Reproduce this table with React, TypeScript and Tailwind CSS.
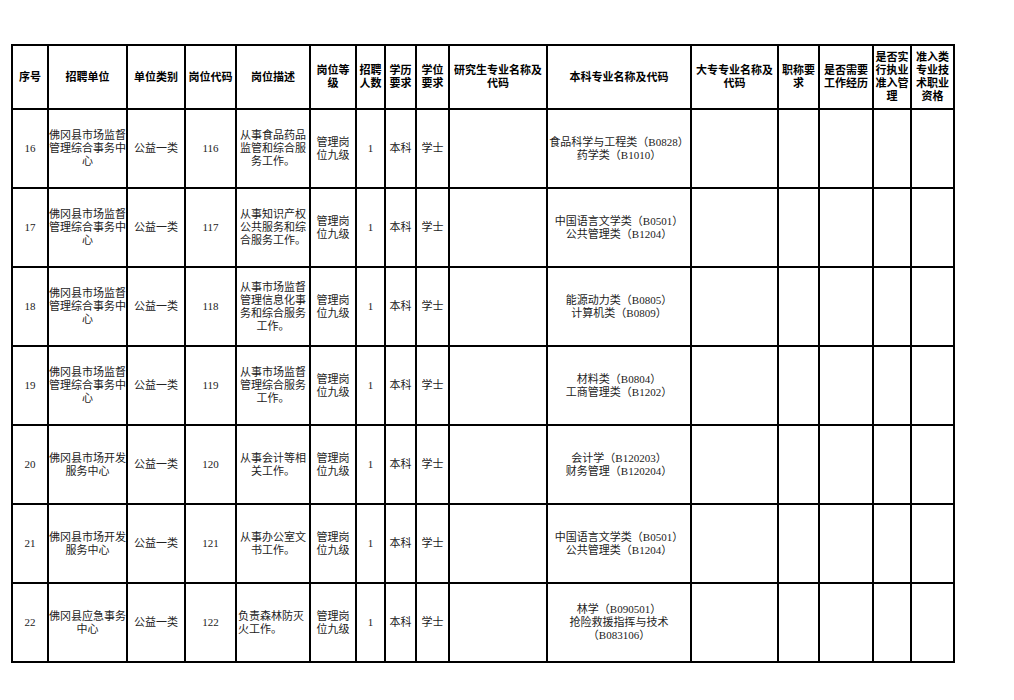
import React from 'react';

const widths = [36, 79, 58, 51, 74, 46, 29, 31, 33, 98, 144, 87, 41, 54, 38, 43];

const headers: string[][] = [
  ['序号'],
  ['招聘单位'],
  ['单位类别'],
  ['岗位代码'],
  ['岗位描述'],
  ['岗位等', '级'],
  ['招聘', '人数'],
  ['学历', '要求'],
  ['学位', '要求'],
  ['研究生专业名称及', '代码'],
  ['本科专业名称及代码'],
  ['大专专业名称及', '代码'],
  ['职称要', '求'],
  ['是否需要', '工作经历'],
  ['是否实', '行执业', '准入管', '理'],
  ['准入类', '专业技', '术职业', '资格'],
];

type Row = {
  no: string;
  unit: string[];
  code: string;
  desc: string[];
  descLeft?: boolean;
  major: string[];
};

const jianDu = ['佛冈县市场监督', '管理综合事务中', '心'];
const kaiFa = ['佛冈县市场开发', '服务中心'];

const rows: Row[] = [
  { no: '16', unit: jianDu, code: '116', desc: ['从事食品药品', '监管和综合服', '务工作。'], major: ['食品科学与工程类（B0828）', '药学类（B1010）'] },
  { no: '17', unit: jianDu, code: '117', desc: ['从事知识产权', '公共服务和综', '合服务工作。'], major: ['中国语言文学类（B0501）', '公共管理类（B1204）'] },
  { no: '18', unit: jianDu, code: '118', desc: ['从事市场监督', '管理信息化事', '务和综合服务', '工作。'], major: ['能源动力类（B0805）', '计算机类（B0809）'] },
  { no: '19', unit: jianDu, code: '119', desc: ['从事市场监督', '管理综合服务', '工作。'], major: ['材料类（B0804）', '工商管理类（B1202）'] },
  { no: '20', unit: kaiFa, code: '120', desc: ['从事会计等相', '关工作。'], major: ['会计学（B120203）', '财务管理（B120204）'] },
  { no: '21', unit: kaiFa, code: '121', desc: ['从事办公室文', '书工作。'], major: ['中国语言文学类（B0501）', '公共管理类（B1204）'] },
  { no: '22', unit: ['佛冈县应急事务', '中心'], code: '122', desc: ['负责森林防灭', '火工作。'], descLeft: true, major: ['林学（B090501）', '抢险救援指挥与技术', '（B083106）'] },
];

function Lines({ lines }: { lines: string[] }) {
  return (
    <>
      {lines.map((l, i) => (
        <span key={i} className="block whitespace-nowrap">
          {l}
        </span>
      ))}
    </>
  );
}

const cell = 'border-2 border-black p-0 align-middle';

export default function App() {
  return (
    <div className="min-h-[700px] w-[1014px] bg-white pt-[44px] pl-[11px] font-['Liberation_Serif','Noto_Sans_CJK_SC',serif] text-[11px] leading-[13px]">
      <table className="table-fixed border-collapse border-2 border-black" style={{ width: 942 }}>
        <colgroup>
          {widths.map((w, i) => (
            <col key={i} style={{ width: w }} />
          ))}
        </colgroup>
        <thead>
          <tr className="h-[64px]">
            {headers.map((h, i) => (
              <th key={i} className={`${cell} text-center font-bold text-black`}>
                <Lines lines={h} />
              </th>
            ))}
          </tr>
        </thead>
        <tbody className="text-[#222]">
          {rows.map((r) => (
            <tr key={r.no} className="h-[79px]">
              <td className={`${cell} text-center`}>{r.no}</td>
              <td className={`${cell} text-center`}>
                <Lines lines={r.unit} />
              </td>
              <td className={`${cell} text-center`}>公益一类</td>
              <td className={`${cell} text-center`}>{r.code}</td>
              <td className={`${cell} ${r.descLeft ? 'text-left pl-[1px]' : 'text-center'}`}>
                <Lines lines={r.desc} />
              </td>
              <td className={`${cell} text-center`}>
                <Lines lines={['管理岗', '位九级']} />
              </td>
              <td className={`${cell} text-center`}>1</td>
              <td className={`${cell} text-center`}>本科</td>
              <td className={`${cell} text-center`}>学士</td>
              <td className={cell}></td>
              <td className={`${cell} text-center`}>
                <Lines lines={r.major} />
              </td>
              <td className={cell}></td>
              <td className={cell}></td>
              <td className={cell}></td>
              <td className={cell}></td>
              <td className={cell}></td>
            </tr>
          ))}
        </tbody>
      </table>
    </div>
  );
}
